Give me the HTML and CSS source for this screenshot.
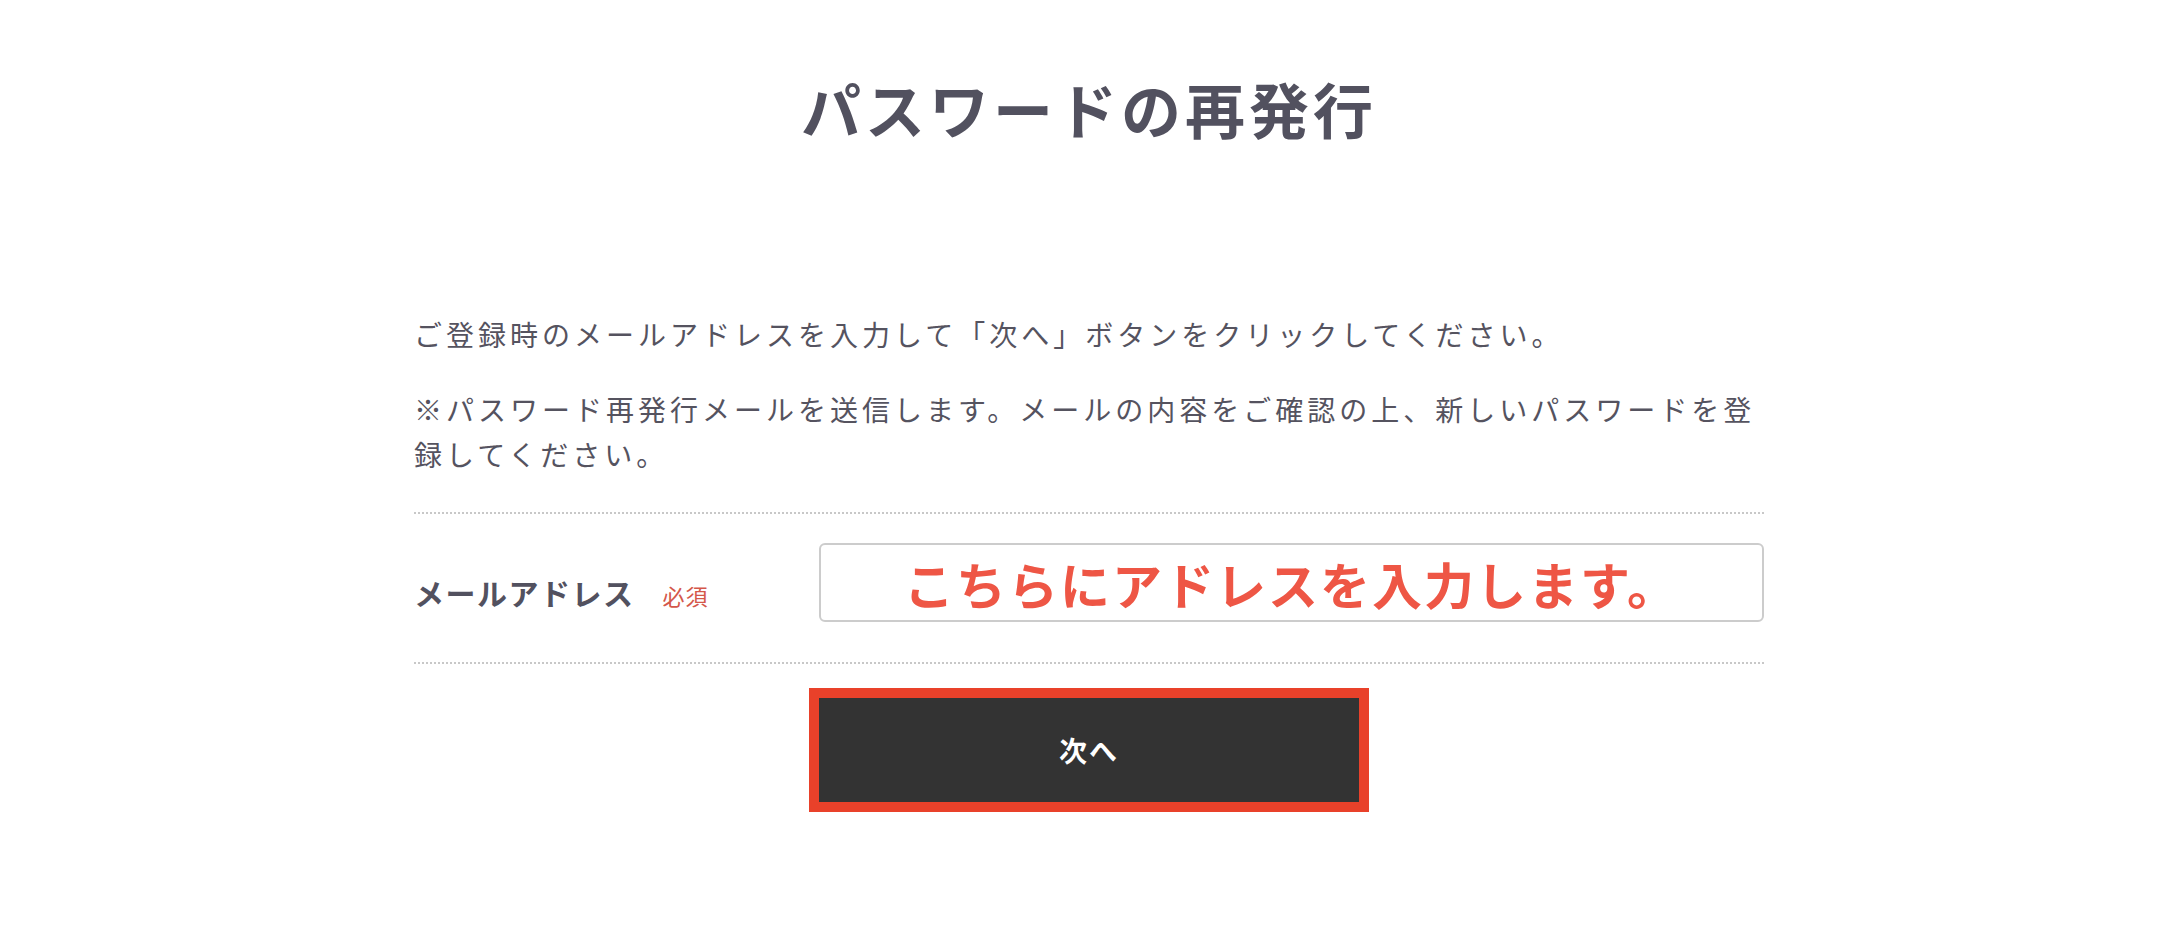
FILE: index.html
```html
<!DOCTYPE html>
<html lang="ja">
<head>
    <meta charset="UTF-8">
    <meta name="viewport" content="width=device-width, initial-scale=1.0">
    <title>パスワードの再発行</title>
    <link rel="stylesheet" href="styles.css">
</head>
<body>
    <main class="container">
        <h1 class="page-title">パスワードの再発行</h1>

        <div class="intro">
            <p>ご登録時のメールアドレスを入力して「次へ」ボタンをクリックしてください。</p>
            <p>※パスワード再発行メールを送信します。メールの内容をご確認の上、新しいパスワードを登録してください。</p>
        </div>

        <form class="reset-form" id="reset-form">
            <div class="form-row">
                <label class="form-label" for="email">メールアドレス<span class="required">必須</span></label>
                <div class="form-field">
                    <input type="text" id="email" name="email" value="こちらにアドレスを入力します。">
                </div>
            </div>
            <div class="form-actions">
                <button type="submit" class="btn-next">次へ</button>
            </div>
        </form>
    </main>
</body>
</html>
```

FILE: styles.css
```css
body {
    margin: 0;
    padding: 0 0 0 6px;
    background: #ffffff;
    color: #55535f;
    font-family: "Noto Sans CJK JP", "Noto Sans", sans-serif;
}
.container {
    width: 1350px;
    margin: 0 auto;
    padding-top: 66px;
}
.page-title {
    margin: 0;
    font-size: 60px;
    line-height: 84px;
    font-weight: 700;
    letter-spacing: 4px;
    text-align: center;
    color: #52515f;
}
.intro {
    margin: 162px 0 35px;
}
.intro p {
    margin: 0;
    font-size: 28px;
    line-height: 45px;
    letter-spacing: 4px;
}
.intro p + p {
    margin-top: 30px;
}
.form-row {
    display: flex;
    align-items: center;
    padding: 29px 0 40px;
    border-top: 2px dotted #c8c8c8;
    border-bottom: 2px dotted #c8c8c8;
}
.form-label {
    flex: 0 0 405px;
    margin-top: 22px;
    font-size: 30px;
    line-height: 40px;
    font-weight: 700;
    letter-spacing: 1.5px;
    color: #52515f;
}
.required {
    margin-left: 28px;
    font-size: 22px;
    font-weight: 400;
    letter-spacing: 1px;
    color: #d4574a;
}
.form-field {
    flex: 1;
}
.form-field input {
    display: block;
    width: 100%;
    height: 79px;
    box-sizing: border-box;
    padding: 0 20px;
    border: 2px solid #cccccc;
    border-radius: 6px;
    font-family: "Noto Sans CJK JP", sans-serif;
    font-size: 50px;
    font-weight: 700;
    letter-spacing: 2px;
    color: #ee5645;
    text-align: center;
    outline: none;
}
.form-actions {
    display: flex;
    justify-content: center;
    margin-top: 24px;
}
.btn-next {
    width: 560px;
    height: 124px;
    box-sizing: border-box;
    border: 10px solid #e9412a;
    background: #333333;
    color: #ffffff;
    font-family: "Noto Sans CJK JP", sans-serif;
    font-size: 28px;
    font-weight: 700;
    letter-spacing: 2px;
    cursor: pointer;
}
```
